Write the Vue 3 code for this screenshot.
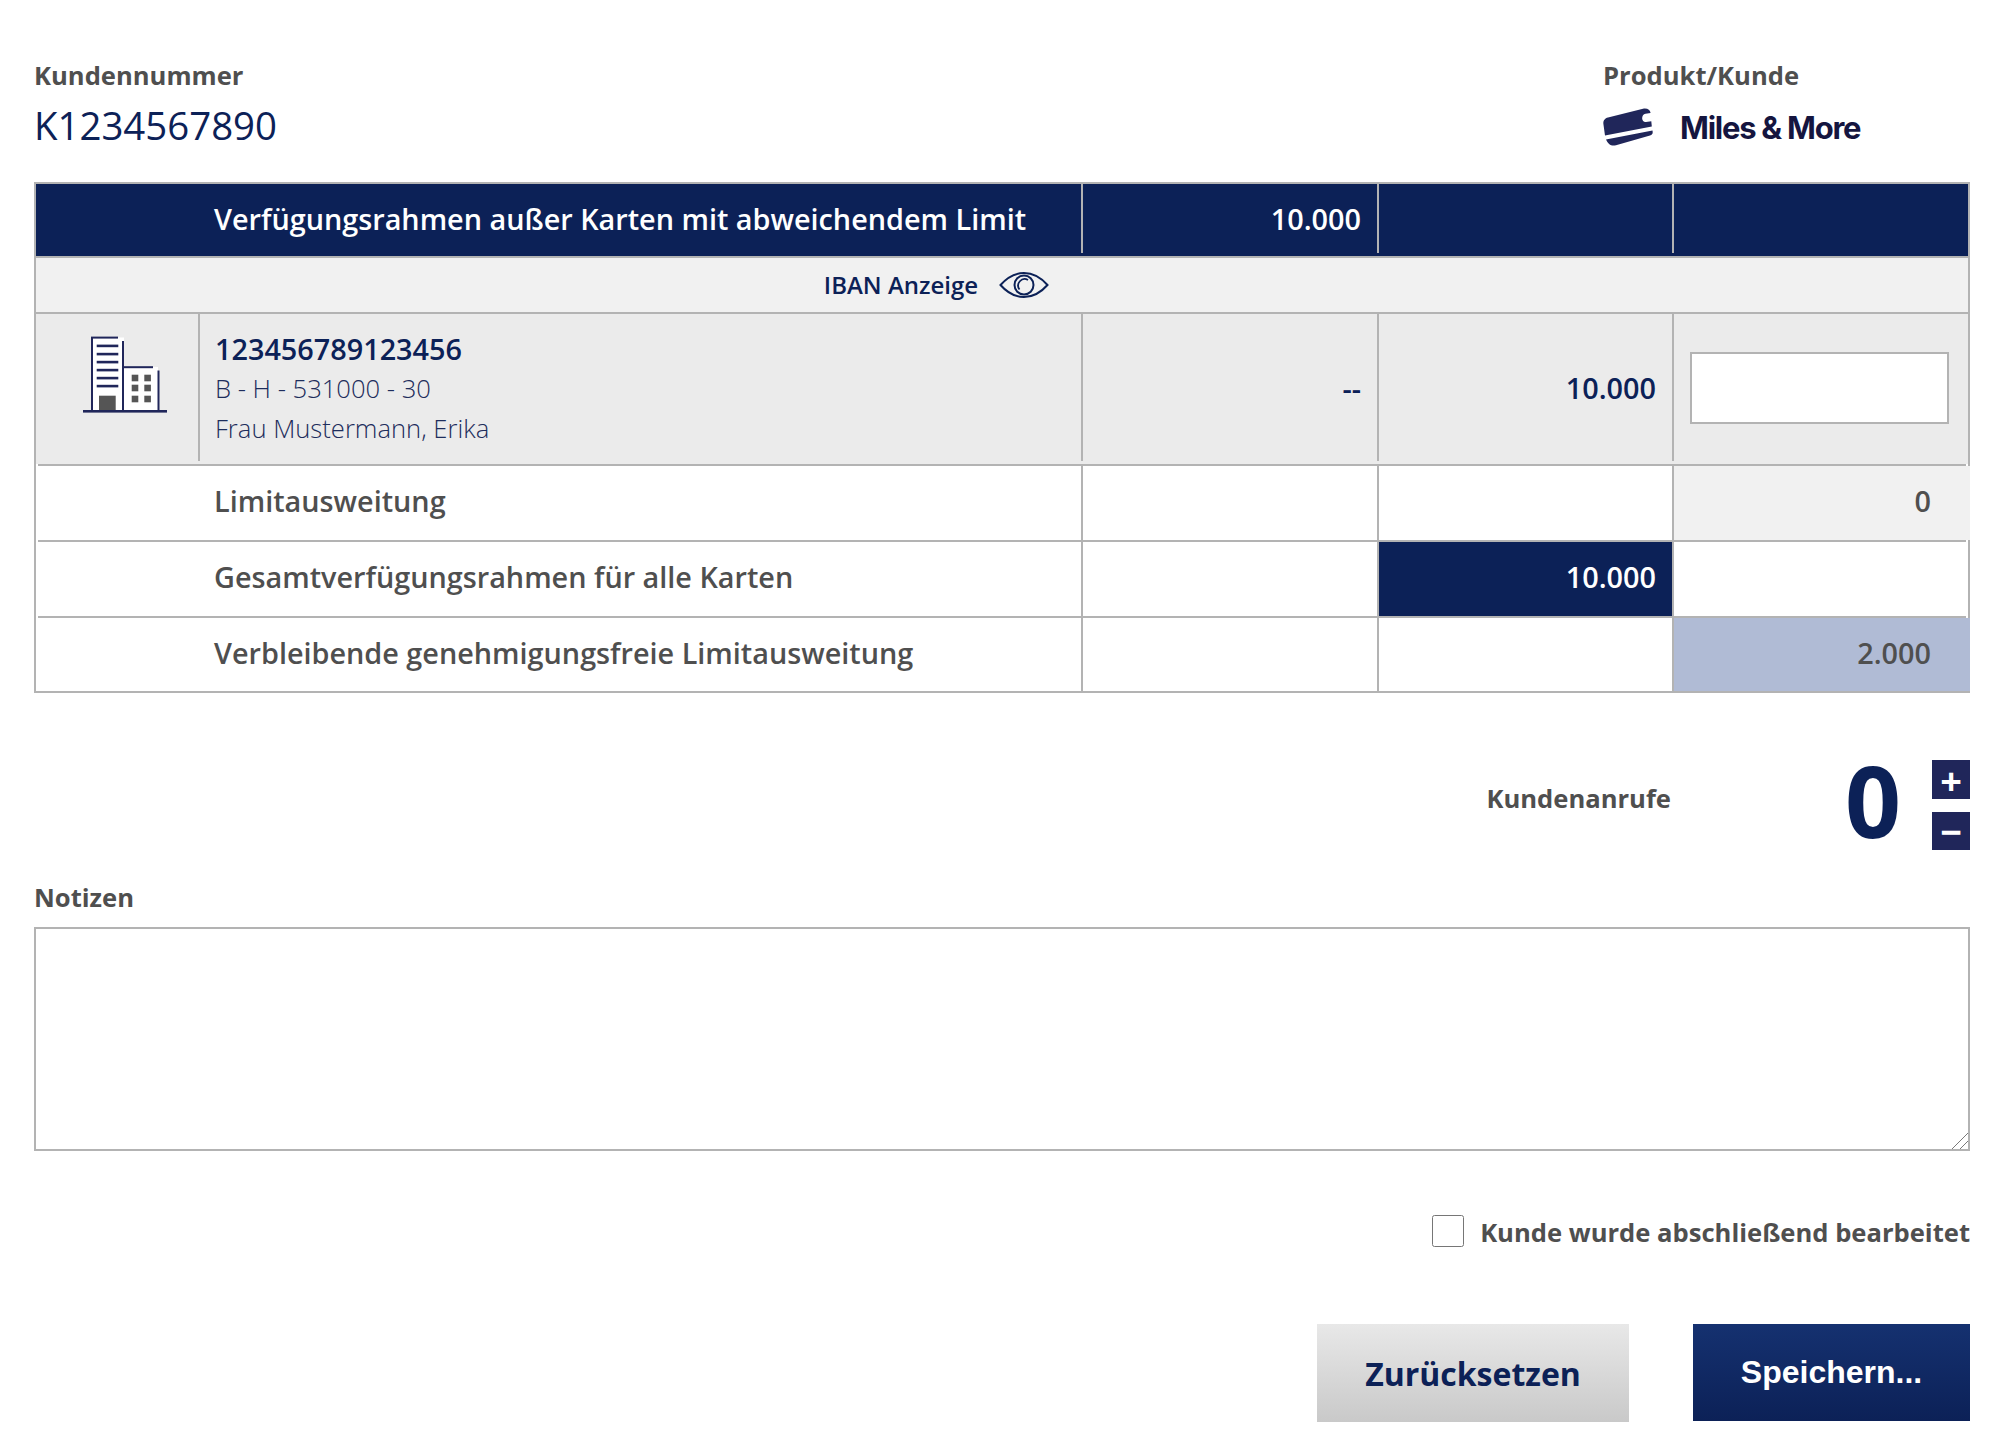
<script setup>
const rows = [
  { label: 'Limitausweitung', c4: '0', cls: 'soft' },
  { label: 'Gesamtverfügungsrahmen für alle Karten', c3: '10.000', cls3: 'navy' },
  { label: 'Verbleibende genehmigungsfreie Limitausweitung', c4: '2.000', cls: 'blue' }
]
</script>

<template>
  <main class="page">
    <header class="top">
      <div>
        <div class="label">Kundennummer</div>
        <div class="kunde">K1234567890</div>
      </div>
      <div class="product">
        <div class="label">Produkt/Kunde</div>
        <div class="brand">
          <svg class="card" viewBox="0 0 50 38" width="50" height="38" aria-hidden="true">
            <path fill="#20265a" d="M5 9.5 L40 .8 C44.5 0 47 2 47.6 5 L42.5 5.8 C38 6.6 38 14.4 43 14 L48.3 13.2 L48.8 18.5 L2 27.5 L.4 16 C0 12.5 2 10.2 5 9.5 Z" />
            <path fill="#20265a" d="M3 31.5 L49.5 22.5 L49.7 24 C49.8 26 49 27 47 27.5 L13 37.3 C8 38.5 5 36 3 31.5 Z" />
          </svg>
          <span class="miles">Miles &amp; More</span>
        </div>
      </div>
    </header>

    <section class="table">
      <div class="row head">
        <div class="cell title">Verfügungsrahmen außer Karten mit abweichendem Limit</div>
        <div class="cell num">10.000</div>
        <div class="cell"></div>
        <div class="cell"></div>
      </div>
      <div class="iban">
        <span>IBAN Anzeige</span>
        <svg viewBox="0 0 50 26" width="50" height="26" fill="none" stroke="#0c2157" stroke-width="2" aria-hidden="true">
          <path d="M1.5 13 C9 4.5 17 1 25 1 C33 1 41 4.5 48.5 13 C41 21.5 33 25 25 25 C17 25 9 21.5 1.5 13 Z" />
          <circle cx="25" cy="13" r="9.5" />
          <path d="M20.5 17.5 A6.5 6.5 0 0 1 29 8" stroke-width="1.8" />
        </svg>
      </div>
      <div class="row account">
        <div class="cell icon">
          <svg viewBox="0 0 84 77" width="84" height="77" aria-hidden="true">
            <rect x="9" y="1.5" width="32" height="73" fill="#fff" />
            <rect x="40" y="31" width="35" height="43" fill="#fff" />
            <g fill="#20265a">
              <rect x="8" y="1" width="2" height="74" />
              <rect x="8" y=".6" width="27" height="2" />
              <rect x="39" y="5" width="2" height="70" />
              <rect x="40" y="30.2" width="30" height="2" />
              <rect x="74.5" y="34.5" width="2" height="40" />
              <rect x="13.7" y="8.6" width="21.6" height="2.6" />
              <rect x="13.7" y="16.8" width="21.6" height="2.6" />
              <rect x="13.7" y="24.8" width="21.6" height="2.6" />
              <rect x="13.7" y="32.8" width="21.6" height="2.6" />
              <rect x="13.7" y="40.8" width="21.6" height="2.6" />
              <rect x="13.7" y="48.8" width="21.6" height="2.6" />
              <rect x="0" y="74" width="84" height="2.6" />
            </g>
            <rect x="16" y="59.7" width="16.7" height="14.3" fill="#555" />
            <g fill="#555">
              <rect x="48.7" y="38.7" width="6.6" height="6.6" /><rect x="61.3" y="38.7" width="6.6" height="6.6" />
              <rect x="48.7" y="48.7" width="6.6" height="6.6" /><rect x="61.3" y="48.7" width="6.6" height="6.6" />
              <rect x="48.7" y="59.7" width="6.6" height="6.6" /><rect x="61.3" y="59.7" width="6.6" height="6.6" />
            </g>
          </svg>
        </div>
        <div class="cell info">
          <div class="acct">123456789123456</div>
          <div class="light">B - H - 531000 - 30</div>
          <div class="light">Frau Mustermann, Erika</div>
        </div>
        <div class="cell num dark">--</div>
        <div class="cell num dark">10.000</div>
        <div class="cell inputcell"><input class="limit" type="text" /></div>
      </div>
      <div v-for="r in rows" :key="r.label" class="row plain">
        <div class="cell title">{{ r.label }}</div>
        <div class="cell"></div>
        <div class="cell num" :class="r.cls3">{{ r.c3 }}</div>
        <div class="cell num wide" :class="r.cls">{{ r.c4 }}</div>
      </div>
    </section>

    <section class="calls">
      <span class="calls-label">Kundenanrufe</span>
      <span class="count">0</span>
      <div class="steppers">
        <button type="button" class="step plus">+</button>
        <button type="button" class="step">−</button>
      </div>
    </section>

    <label class="label notes-label" for="notes">Notizen</label>
    <div class="notes-wrap">
      <textarea id="notes" class="notes"></textarea>
      <svg class="grip" viewBox="0 0 16 16" width="16" height="16" fill="none" stroke="#7a7a7a" stroke-width="1" aria-hidden="true">
        <path d="M0 16 L16 0 M8 16 L16 8" />
      </svg>
    </div>

    <label class="done">
      <input type="checkbox" />
      <span>Kunde wurde abschließend bearbeitet</span>
    </label>

    <div class="actions">
      <button type="button" class="btn reset">Zurücksetzen</button>
      <button type="button" class="btn save"><span>Speichern...</span></button>
    </div>
  </main>
</template>

<style>
html, body { margin: 0; background: #fff; }
</style>

<style scoped>
.page {
  box-sizing: border-box;
  width: 1998px;
  height: 1451px;
  padding: 58px 28px 0 34px;
  font-family: "Open Sans", sans-serif;
  color: #0c2157;
  overflow: hidden;
}
.top { display: flex; justify-content: space-between; height: 124px; }
.label { font-size: 25.6px; line-height: 36px; font-weight: 700; color: #4f4f4f; }
.kunde { margin-top: 5px; font-size: 38.4px; line-height: 52px; font-weight: 400; }
.product { width: 367px; }
.brand { display: flex; align-items: center; gap: 27px; margin-top: 14px; }
.card { flex: none; }
.miles {
  font-family: Inter, sans-serif; font-size: 31px; font-weight: 700;
  letter-spacing: -1.25px; color: #15153f;
}
.table { border: 2px solid #b3b3b3; }
.row { display: grid; grid-template-columns: 1045px 296px 295px 296px; }
.cell { box-sizing: border-box; display: flex; align-items: center; font-size: 28.8px; }
.cell + .cell { border-left: 2px solid #b3b3b3; }
.num { justify-content: flex-end; padding-right: 16px; font-weight: 600; }
.title { padding-left: 178px; font-weight: 600; }
.head { height: 72px; background: #0c2157; color: #fff; }
.head .cell { height: 69px; }
.iban {
  display: flex; align-items: center; justify-content: center; gap: 21px;
  height: 58px; box-sizing: border-box; padding: 0 131px 1px 0;
  background: #f1f1f1; border-top: 2px solid #b3b3b3; border-bottom: 2px solid #b3b3b3;
  font-size: 24px; font-weight: 600;
}
.account { height: 150px; grid-template-columns: 162px 883px 296px 295px 296px; background: #ebebeb; }
.account .cell { height: 147px; }
.icon { align-items: flex-start; padding: 22px 0 0 47px; }
.icon svg { display: block; }
.info { display: block; padding: 15px 0 0 15px; }
.acct { font-size: 28.8px; line-height: 40px; font-weight: 600; }
.light { font-size: 25.6px; line-height: 40px; font-weight: 300; color: #1d2d5c; }
.dark { color: #0c2157; }
.inputcell { padding: 0 19px 0 16px; }
.limit { box-sizing: border-box; width: 100%; height: 72px; border: 2px solid #b3b3b3; background: #fff; border-radius: 0; outline: 0; }
.plain { position: relative; height: 76px; padding-top: 2px; box-sizing: border-box; color: #4f4f4f; }
.plain:last-child { height: 75px; }
.plain::before {
  content: ""; position: absolute; top: 0; left: 2px; right: 2px; height: 2px; background: #b3b3b3;
}
.plain .cell { padding-bottom: 5px; }
.wide { padding-right: 39px; margin-right: -2px; }
.soft { background: #f1f1f1; }
.navy { background: #0c2157; color: #fff; }
.blue { background: #b0bbd5; }
.calls { display: flex; align-items: center; justify-content: flex-end; height: 90px; margin-top: 67px; }
.calls-label { font-size: 25.6px; font-weight: 700; color: #4f4f4f; margin: 0 174px 14px 0; }
.count { font-size: 98px; line-height: 90px; font-weight: 700; color: #0c2157; margin: 0 31px 10px 0; }
.steppers { display: flex; flex-direction: column; gap: 13px; }
.step {
  display: block; width: 38px; height: 38px; padding: 0; border: 0; background: #20265a; color: #fff;
  font-family: "Open Sans", sans-serif; font-size: 38px; line-height: 36px; font-weight: 700;
}
.plus { height: 39px; }
.notes-label { display: block; margin-top: 30px; }
.notes-wrap { position: relative; margin-top: 11px; }
.notes {
  display: block; box-sizing: border-box; width: 100%; height: 224px; resize: none;
  border: 2px solid #b3b3b3; border-radius: 0; background: #fff; outline: 0;
}
.grip { position: absolute; right: 2px; bottom: 2px; pointer-events: none; }
.done {
  display: flex; align-items: center; justify-content: flex-end; gap: 16px;
  margin-top: 63px; height: 36px;
  font-size: 25.6px; font-weight: 700; color: #4f4f4f;
}
.done input { width: 32px; height: 32px; margin: 0 0 3px; }
.actions { display: flex; justify-content: flex-end; gap: 64px; margin-top: 74px; align-items: flex-start; }
.btn { border: 0; padding: 0; border-radius: 0; }
.reset {
  width: 312px; height: 98px; background: linear-gradient(#e8e8e8, #c9c9c9); color: #0c2157;
  font-family: "Open Sans", sans-serif; font-size: 32px; font-weight: 700;
}
.save {
  width: 277px; height: 97px; background: linear-gradient(#153170, #0c2157); color: #fff;
  font-family: "Liberation Sans", sans-serif; font-size: 32px; font-weight: 700;
}
</style>
